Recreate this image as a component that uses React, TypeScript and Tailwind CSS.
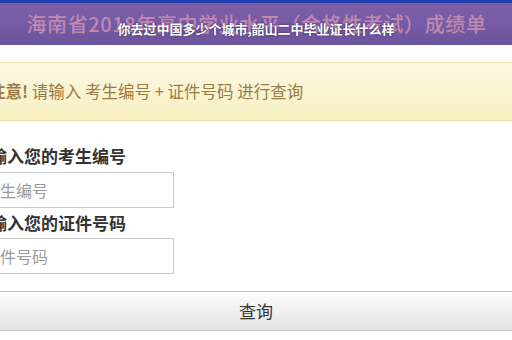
export default function App() {
  const cjk = { fontFamily: '"Noto Sans CJK SC", "Noto Sans", sans-serif' };
  return (
    <div
      style={cjk}
      className="flex h-[340px] w-[512px] flex-col overflow-hidden bg-white text-[#333]"
    >
      {/* Header banner */}
      <header className="flex h-[45px] flex-col">
        <div className="h-[3px] bg-[#1f3fae]" />
        <div className="relative flex flex-1 items-center justify-center bg-gradient-to-b from-[#7a5fa8] via-[#765aa5] to-[#6a559c]">
          <div className="ml-[1px] whitespace-nowrap text-[20px] font-medium tracking-[0.6px] text-[#c98fb0] opacity-90">
            海南省2018年高中学业水平（合格性考试）成绩单
          </div>
          <div className="absolute left-0 right-0 top-[17px] text-center text-[13px] font-bold leading-[18px] text-white [text-shadow:0_0_2px_rgba(40,20,60,0.9)]">
            你去过中国多少个城市,韶山二中毕业证长什么样
          </div>
        </div>
      </header>

      {/* Warning */}
      <div className="mt-[17px] flex h-[59px] items-center border-y border-[#f0e3a8] bg-gradient-to-b from-[#fcf8e3] to-[#f8efc0] shadow-[0_1px_2px_rgba(0,0,0,0.05)]">
        <p className="-ml-[11px] whitespace-nowrap text-[16.5px] text-[#9a7b45]">
          <strong>注意!</strong> 请输入 考生编号 + 证件号码 进行查询
        </p>
      </div>

      {/* Form */}
      <form className="mt-[23px] flex flex-col">
        <label className="-ml-[10px] text-[17px] font-bold leading-[24px] text-[#333]">
          输入您的考生编号
        </label>
        <input
          className="-ml-[30px] mt-[4px] h-[36px] w-[204px] border border-[#ccc] px-[13px] text-[16px] placeholder:text-[#9a9a9a]"
          placeholder="考生编号"
        />
        <label className="-ml-[10px] mt-[3px] text-[17px] font-bold leading-[24px] text-[#333]">
          输入您的证件号码
        </label>
        <input
          className="-ml-[30px] mt-[3px] h-[36px] w-[204px] border border-[#ccc] px-[13px] text-[16px] placeholder:text-[#9a9a9a]"
          placeholder="证件号码"
        />
        <button
          type="button"
          className="-mx-[2px] mt-[17px] h-[40px] border border-[#c4c4c4] bg-gradient-to-b from-[#fdfdfd] to-[#e2e2e2] text-[17px] text-[#333]"
        >
          查询
        </button>
      </form>
    </div>
  );
}
